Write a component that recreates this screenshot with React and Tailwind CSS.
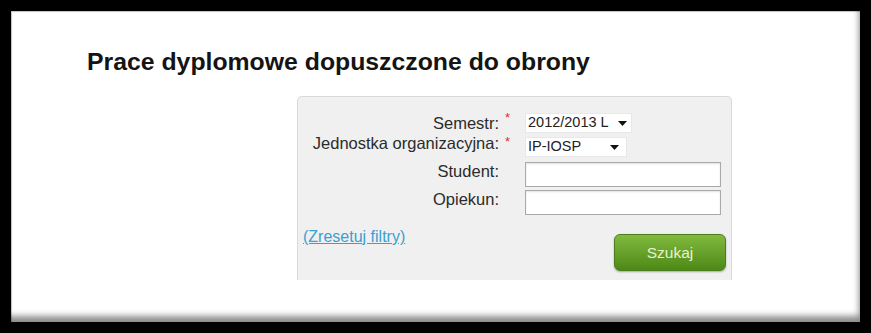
import React from 'react'

function Arrow() {
  return (
    <svg width="9" height="5" viewBox="0 0 9 5" className="shrink-0">
      <path d="M0 0h9L4.5 5z" fill="#111" />
    </svg>
  )
}

function Row({ label, required, lift, className, children }) {
  return (
    <div className={`flex items-center ${className}`}>
      <div className={`w-[201px] text-right text-[16.5px] leading-[20px] text-[#2b2b2b] ${lift ? 'mb-[8px]' : ''}`}>
        {label}
      </div>
      <div className="w-[26px] self-start -mt-[1px] pl-[6px] text-[13px] leading-[12px] text-[#d9302a]">
        {required ? '*' : ''}
      </div>
      {children}
    </div>
  )
}

function Select({ value, className }) {
  return (
    <div className={`h-[20px] bg-white border border-[#e8e8e8] flex items-center justify-between pl-[2px] text-[14.5px] text-[#222] ${className}`}>
      <span>{value}</span>
      <Arrow />
    </div>
  )
}

function TextInput() {
  return <div className="w-[196px] h-[25px] bg-white border border-[#a9a9a9] shadow-[inset_0_1px_2px_rgba(0,0,0,0.12)]" />
}

export default function App() {
  return (
    <div className="w-[871px] h-[333px] bg-black pt-[11px] pl-[11px] font-['Liberation_Sans',Arial,sans-serif]">
      <div className="w-[849px] h-[311px] bg-white pt-[36px] shadow-[inset_1px_1px_1px_rgba(0,0,0,0.25),inset_-4px_-9px_6px_-3px_rgba(0,0,0,0.45)]">
        <h1 className="pl-[76px] text-[24.8px] leading-[29px] font-bold text-[#141414]">
          Prace dyplomowe dopuszczone do obrony
        </h1>

        <div className="mt-[20px] ml-[286px] w-[435px] h-[184px] bg-[#f0f0f0] border border-b-0 border-[#d9d9d9] rounded-t-[5px]">
          <Row label="Semestr:" required className="mt-[16px] h-[20px]">
            <Select value="2012/2013 L" className="w-[107px] pr-[4px]" />
          </Row>
          <Row label="Jednostka organizacyjna:" required lift className="mt-[4px] h-[20px]">
            <Select value="IP-IOSP" className="w-[102px] pr-[7px]" />
          </Row>
          <Row label="Student:" lift className="mt-[5px] h-[25px]">
            <TextInput />
          </Row>
          <Row label="Opiekun:" lift className="mt-[3px] h-[25px]">
            <TextInput />
          </Row>

          <div className="flex justify-between items-start pl-[5px] pr-[5px]">
            <a href="#" className="mt-[12px] text-[16px] leading-[20px] text-[#3a9fd2] underline">
              (Zresetuj filtry)
            </a>
            <button className="mt-[19px] w-[112px] h-[37px] rounded-[6px] border border-[#4b7d1c] bg-linear-to-b from-[#82ba3e] to-[#4d8916] text-[15.5px] text-[#e6f2d2] shadow-[0_1px_2px_rgba(0,0,0,0.3)]">
              Szukaj
            </button>
          </div>
        </div>
      </div>
    </div>
  )
}
